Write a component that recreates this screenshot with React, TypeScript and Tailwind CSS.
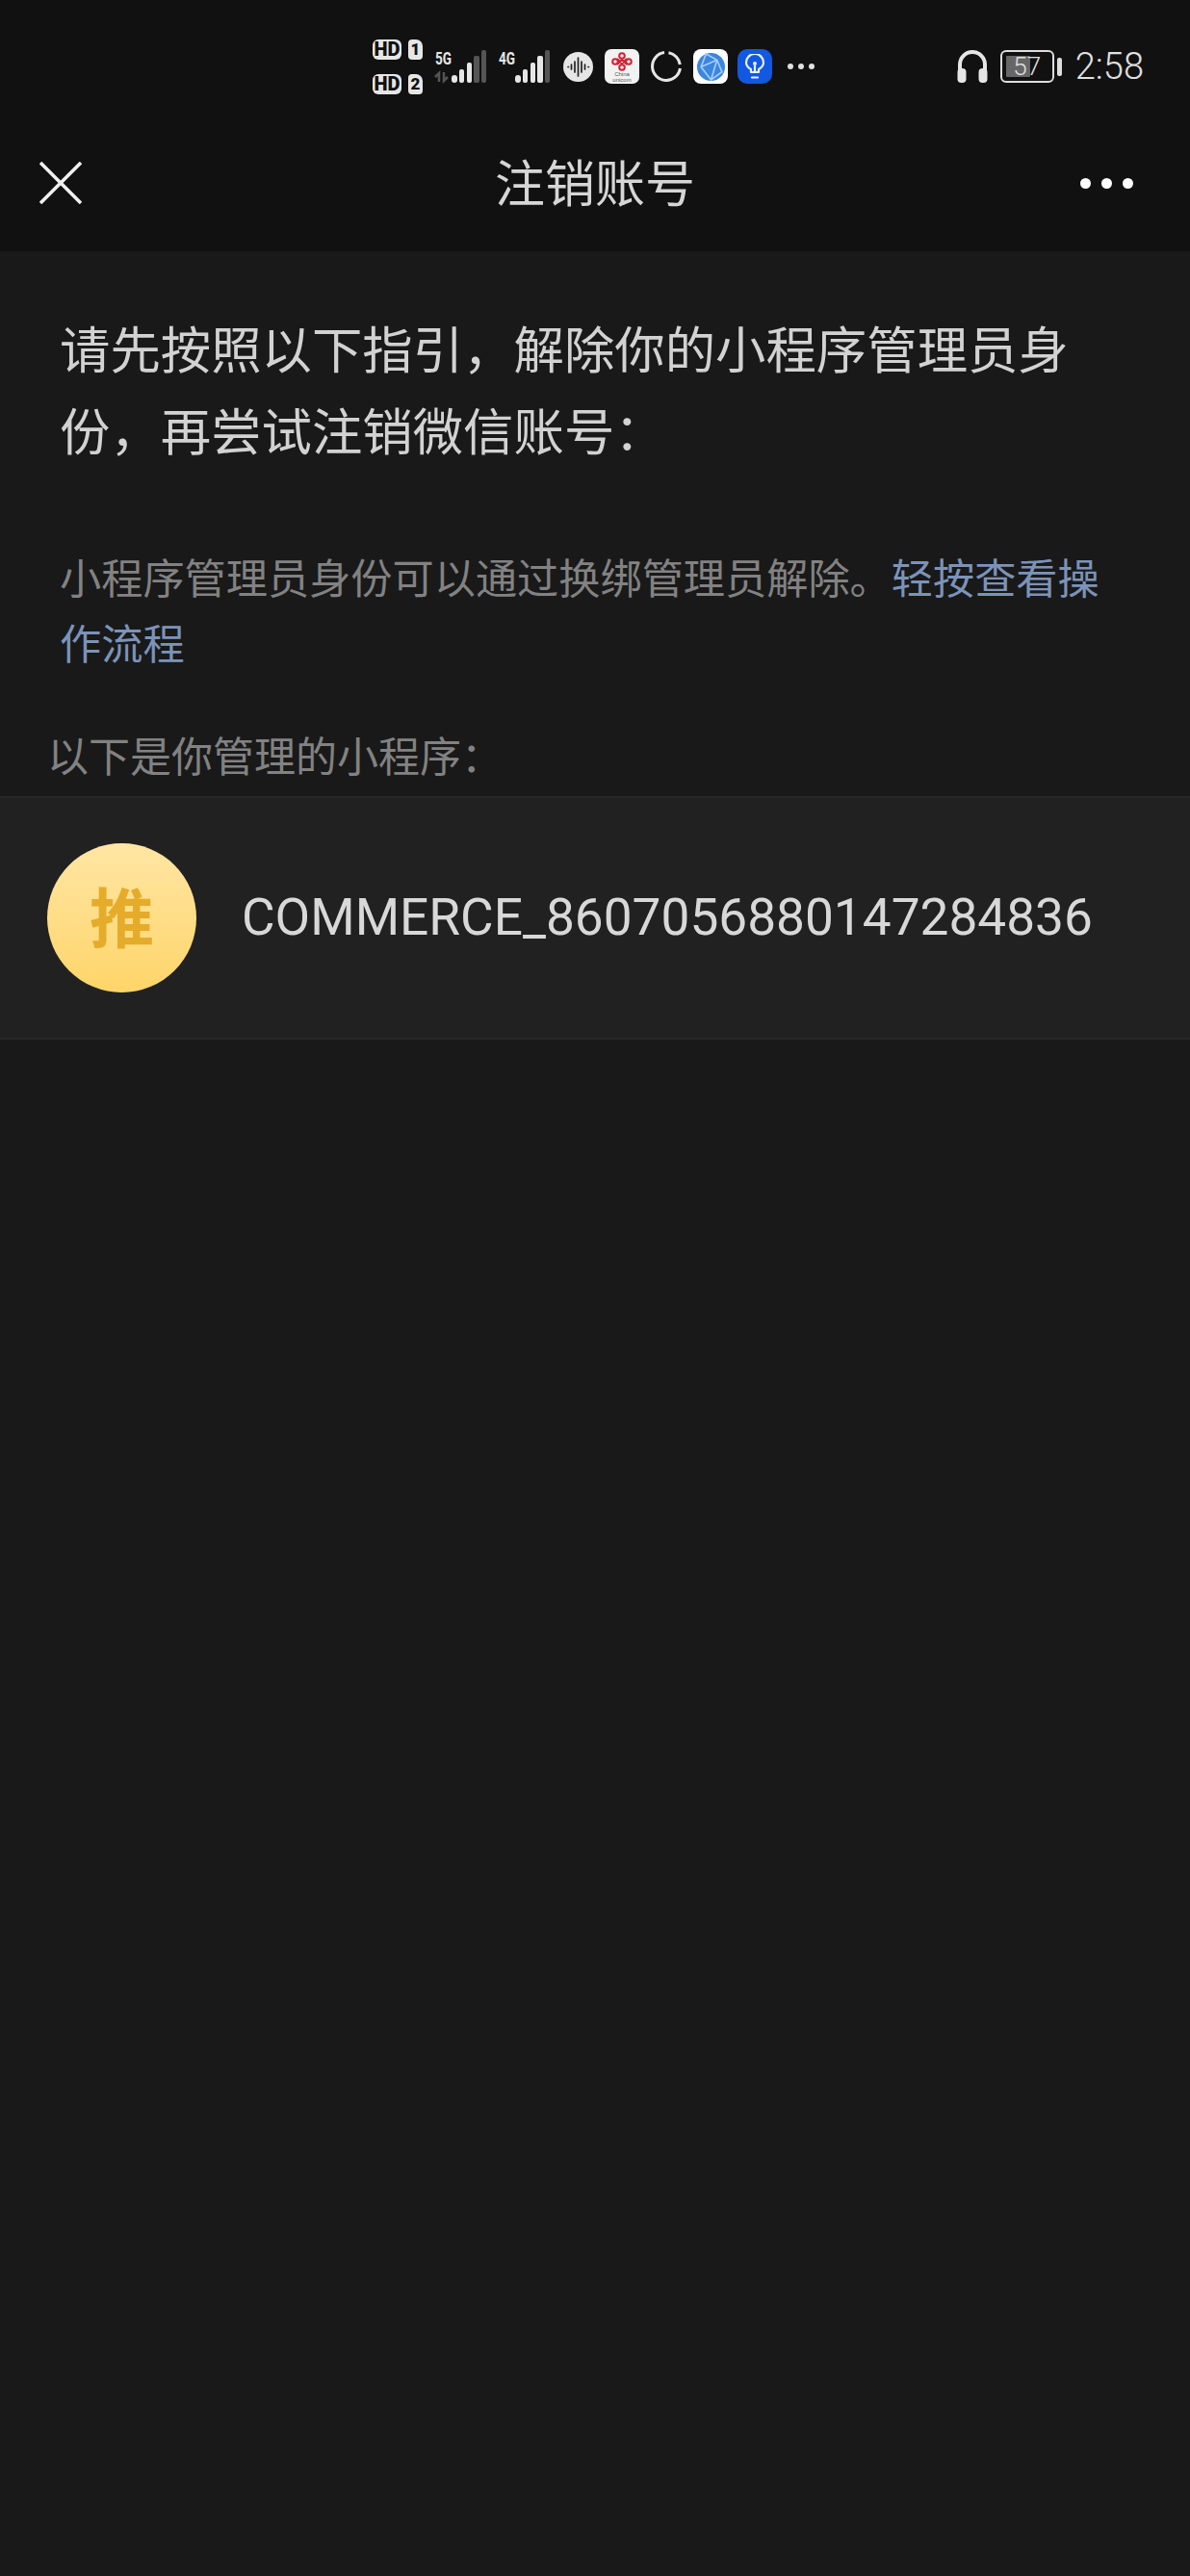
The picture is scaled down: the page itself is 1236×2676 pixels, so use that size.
const cjk = "font-['Noto_Sans_CJK_SC','Noto_Sans',sans-serif]";

function HdSim({ n }: { n: string }) {
  return (
    <div className="flex items-center gap-[7px]">
      <span className="flex h-[21px] w-[30px] items-center justify-center rounded-[6px] bg-[#e6e6e6] font-['Roboto',sans-serif] text-[20px] leading-none font-black text-[#111111]">
        HD
      </span>
      <span className="flex h-[21px] w-[15px] items-center justify-center rounded-[4px] rounded-tr-[7px] bg-[#e6e6e6] font-['Roboto',sans-serif] text-[17px] leading-none font-black text-[#111111]">
        {n}
      </span>
    </div>
  );
}

function Signal({ label, arrows }: { label: string; arrows?: boolean }) {
  return (
    <svg width="55" height="36" viewBox="0 0 55 36" className="shrink-0 overflow-visible">
      <text x="1" y="16" fill="#e6e6e6" fontFamily="Roboto, sans-serif" fontSize="19" fontWeight="700" textLength="17" lengthAdjust="spacingAndGlyphs">
        {label}
      </text>
      {arrows && <path d="M5 34V25l-4 4M10 24v9l4-4" fill="none" stroke="#555555" strokeWidth="2.500" />}
      <rect x="18" y="27" width="6" height="8" rx="3" fill="#e6e6e6" />
      <rect x="26" y="21" width="5" height="14" rx="2" fill="#e6e6e6" />
      <rect x="34" y="14" width="5" height="21" rx="2" fill="#e6e6e6" />
      <rect x="41" y="7" width="6" height="28" rx="2" fill={arrows ? "#555555" : "#e6e6e6"} />
      <rect x="49" y="1" width="5" height="34" rx="2" fill="#555555" />
    </svg>
  );
}

function Voice() {
  return (
    <svg width="31" height="31" viewBox="0 0 31 31" className="shrink-0">
      <circle cx="15.5" cy="15.5" r="15.5" fill="#e6e6e6" />
      <path d="M5 15.500h.5M8.500 13v5M12 10v11M15.500 6v19M19 10v11M22.500 13v5M26 15.500h.5" stroke="#222222" strokeWidth="1.700" strokeLinecap="round" />
    </svg>
  );
}

function Unicom() {
  return (
    <div className="flex h-[36px] w-[36px] shrink-0 flex-col items-center rounded-[7px] bg-[#f2f2f2] pt-[3px]">
      <svg width="24" height="20" viewBox="0 0 24 20" fill="none" stroke="#cf2233" strokeWidth="2">
        <circle cx="12" cy="4" r="2.800" />
        <circle cx="5" cy="10" r="2.800" />
        <circle cx="19" cy="10" r="2.800" />
        <circle cx="12" cy="16" r="2.800" />
        <path d="M7 7l5 5 5-5M7 13l5-5 5 5" />
      </svg>
      <span className="font-['Liberation_Sans',sans-serif] text-[6px] leading-[6px] text-[#555555]">China</span>
      <span className="font-['Liberation_Sans',sans-serif] text-[6px] leading-[6px] text-[#555555]">unicom</span>
    </div>
  );
}

function Ring() {
  return (
    <svg width="34" height="34" viewBox="0 0 34 34" className="shrink-0">
      <path d="M19.500 2.700A14.500 14.500 0 0 1 31.300 15" fill="none" stroke="#e6e6e6" strokeWidth="3" />
      <path d="M31.400 19A14.500 14.500 0 1 1 15 2.600" fill="none" stroke="#e6e6e6" strokeWidth="3" />
    </svg>
  );
}

function Globe() {
  return (
    <div className="flex h-[36px] w-[36px] shrink-0 items-center justify-center rounded-[8px] bg-white">
      <svg width="29" height="29" viewBox="0 0 28 28">
        <circle cx="14" cy="14" r="14" fill="#3c86de" />
        <path d="M9 1L4 14l10 13 11-8-5-12zM4 14l16-7M14 27l6-20" fill="none" stroke="#a5cdf5" strokeWidth="1.600" />
      </svg>
    </div>
  );
}

function Bulb() {
  return (
    <div className="flex h-[36px] w-[36px] shrink-0 items-center justify-center rounded-[10px] bg-[#1358e0]">
      <svg width="22" height="27" viewBox="0 0 22 27" fill="none" stroke="#e8f0ff" strokeWidth="2.200">
        <path d="M7 19v-3C3.500 14 2 11.500 2 9a9 9 0 0 1 18 0c0 2.500-1.500 5-5 7v3z" strokeLinejoin="round" />
        <path d="M8 24.500h6" strokeLinecap="round" />
        <path d="M11 19v-7" />
        <circle cx="11" cy="10" r="2" fill="#e8f0ff" stroke="none" />
      </svg>
    </div>
  );
}

function Headphones() {
  return (
    <svg width="32" height="34" viewBox="0 0 32 34" className="shrink-0">
      <path d="M3 22v-7a13 13 0 0 1 26 0v7" fill="none" stroke="#e6e6e6" strokeWidth="4" />
      <rect x="0.500" y="19" width="9" height="15" rx="4" fill="#e6e6e6" />
      <rect x="22.500" y="19" width="9" height="15" rx="4" fill="#e6e6e6" />
    </svg>
  );
}

function Battery() {
  return (
    <div className="flex shrink-0 items-center gap-[3px]">
      <div className="relative flex h-[34px] w-[56px] items-center justify-center overflow-hidden rounded-[6px] border-[2px] border-[#dddddd] p-[4px]">
        <div className="h-full w-[57%] self-start rounded-[1px] bg-[#666666]" />
        <div className="flex-1" />
        <span className="absolute inset-0 flex items-center justify-center font-['Roboto',sans-serif] text-[26px] leading-none font-light text-[#e0e0e0]">
          57
        </span>
      </div>
      <div className="h-[19px] w-[5px] rounded-[2px] bg-[#dddddd]" />
    </div>
  );
}

function StatusBar() {
  return (
    <div className="flex h-[58px] items-center pl-[387px]">
      <div className="flex w-[64px] shrink-0 flex-col gap-[15px]">
        <HdSim n="1" />
        <HdSim n="2" />
      </div>
      <Signal label="5G" arrows />
      <div className="w-[11px] shrink-0" />
      <Signal label="4G" />
      <div className="w-[13px] shrink-0" />
      <Voice />
      <div className="w-[12px] shrink-0" />
      <Unicom />
      <div className="w-[11px] shrink-0" />
      <Ring />
      <div className="w-[11px] shrink-0" />
      <Globe />
      <div className="w-[10px] shrink-0" />
      <Bulb />
      <div className="ml-[16px] flex shrink-0 gap-[5px]">
        <span className="h-[6px] w-[6px] rounded-full bg-[#e0e0e0]" />
        <span className="h-[6px] w-[6px] rounded-full bg-[#e0e0e0]" />
        <span className="h-[6px] w-[6px] rounded-full bg-[#e0e0e0]" />
      </div>
      <div className="ml-auto flex items-center pr-[48px]">
        <Headphones />
        <div className="w-[13px]" />
        <Battery />
        <span className="ml-[14px] font-['Roboto',sans-serif] text-[38px] leading-none font-light text-[#e0e0e0]">2:58</span>
      </div>
    </div>
  );
}

function TitleBar() {
  return (
    <div className="mt-[32px] grid h-[120px] grid-cols-[1fr_auto_1fr] items-center">
      <svg width="44" height="44" viewBox="0 0 44 44" className="ml-[41px]">
        <path d="M1 1l42 42M43 1L1 43" stroke="#f0f0f0" strokeWidth="3.600" />
      </svg>
      <span className={`pb-[5px] ${cjk} text-[52px] leading-none text-[#d6d6d6]`}>注销账号</span>
      <div className="mr-[59px] flex justify-end gap-[11px]">
        <span className="h-[11px] w-[11px] rounded-full bg-white" />
        <span className="h-[11px] w-[11px] rounded-full bg-white" />
        <span className="h-[11px] w-[11px] rounded-full bg-white" />
      </div>
    </div>
  );
}

export default function App() {
  return (
    <div className={`flex min-h-[2676px] flex-col bg-[#191919] ${cjk}`}>
      <header className="h-[261px] bg-[#111111] pt-[40px]">
        <StatusBar />
        <TitleBar />
      </header>

      <main className="flex flex-col">
        <h1 className="pt-[57px] pr-[50px] pl-[62px] text-[52.4px] leading-[85px] font-normal text-[#d2d2d2]">
          请先按照以下指引，解除你的小程序管理员身份，再尝试注销微信账号：
        </h1>
        <p className="mt-[76px] pr-[60px] pl-[62px] text-[43.2px] leading-[68px] text-[#828282]">
          小程序管理员身份可以通过换绑管理员解除。<span className="text-[#7c93b8]">轻按查看操作流程</span>
        </p>
        <p className="mt-[53px] pl-[49px] text-[43px] leading-[60px] text-[#828282]">以下是你管理的小程序：</p>

        <div className="mt-[14px] flex h-[253px] items-center border-y-2 border-[#282828] bg-[#212121] pl-[49px]">
          <div className="flex h-[155px] w-[155px] shrink-0 items-center justify-center rounded-full bg-gradient-to-b from-[#ffe6a3] to-[#ffd568]">
            <span className="pb-[9px] text-[67px] leading-none font-bold text-[#e5ab2a]">推</span>
          </div>
          <span className="ml-[47px] font-['Roboto',sans-serif] text-[53.2px] leading-none font-normal text-[#d8d8d8]">
            COMMERCE_8607056880147284836
          </span>
        </div>
      </main>
    </div>
  );
}
